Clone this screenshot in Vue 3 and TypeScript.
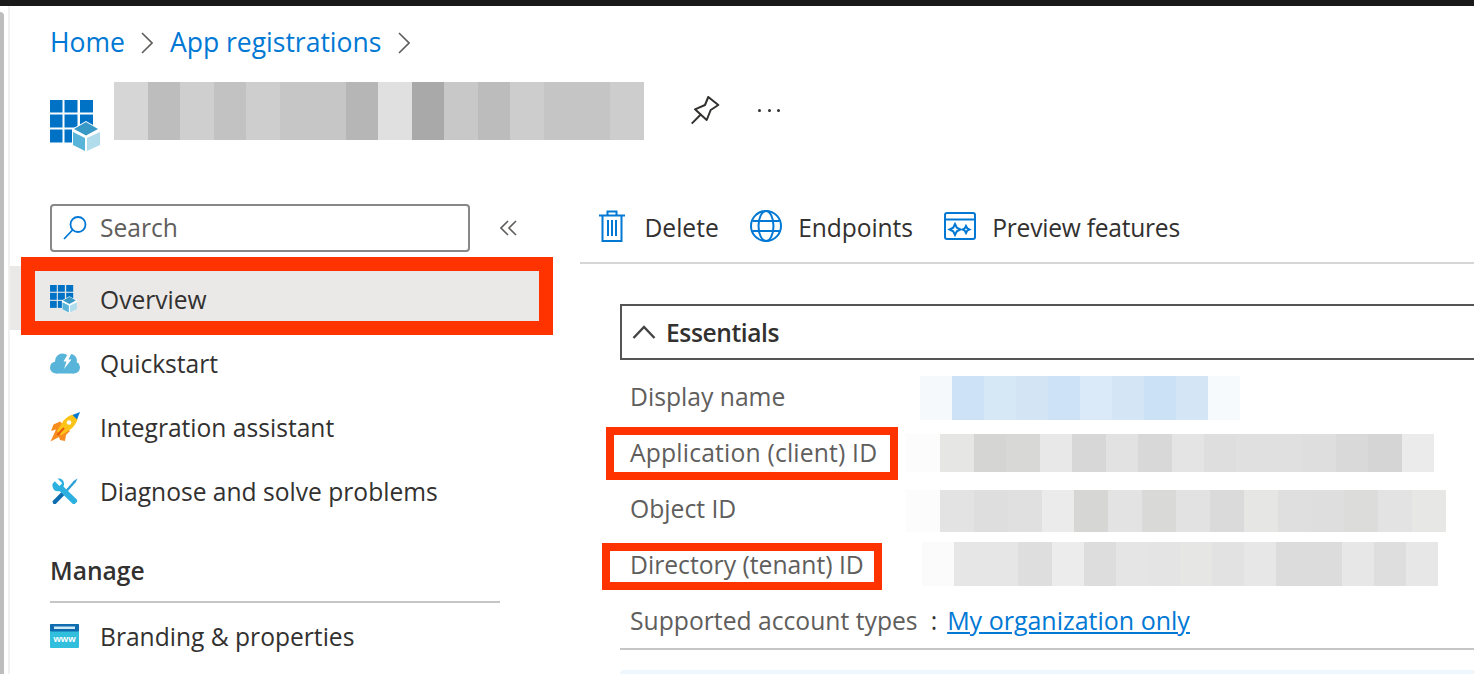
<script setup lang="ts">
interface Cell { w: number; c: string }
const cells = (ws: number[], cs: string[]): Cell[] => ws.map((w, i) => ({ w, c: cs[i] }))

const titleBlur = cells(
  [34, 32, 34, 32, 34, 66, 32, 34, 32, 34, 32, 34, 66, 34],
  ['#d6d6d6', '#bdbdbd', '#cfcfcf', '#c2c2c2', '#cecece', '#c6c6c6', '#b6b6b6', '#e0e0e0', '#a9a9a9', '#c8c8c8', '#bcbcbc', '#cdcdcd', '#c5c5c5', '#cdcdcd']
)

const rows = [
  { label: 'Display name', mark: '', offset: 14, height: 44, nudge: 2,
    blur: cells([32, 32, 32, 32, 32, 32, 32, 32, 32, 32],
      ['#f5f9fc', '#cde2f6', '#d6e7f6', '#d3e5f5', '#cde2f6', '#daeaf8', '#d4e6f6', '#cbe1f6', '#d4e6f6', '#f7fafd']) },
  { label: 'Application (client) ID', mark: 'mark-app', offset: 0, height: 38, nudge: 0,
    blur: cells([34, 34, 32, 34, 32, 34, 32, 34, 32, 32, 66, 34, 32, 34, 32],
      ['#fcfcfc', '#e6e6e4', '#d5d5d3', '#d8d8d6', '#e8e8e8', '#d7d7d7', '#e2e2e2', '#d8d8d8', '#e4e4e4', '#dedede', '#e0e0e0', '#dedede', '#d9d9d9', '#d5d5d5', '#ebebeb']) },
  { label: 'Object ID', mark: '', offset: 0, height: 42, nudge: 4,
    blur: cells([34, 34, 34, 34, 32, 34, 34, 34, 34, 34, 34, 33, 33, 34, 34, 34],
      ['#fcfcfc', '#e3e3e3', '#dedede', '#e0e0e0', '#ebebeb', '#d6d6d4', '#e3e3e3', '#d9d9d7', '#e2e2e2', '#dadada', '#e6e6e4', '#dfdfdf', '#dedede', '#dcdcda', '#e3e3e3', '#e7e7e5']) },
  { label: 'Directory (tenant) ID', mark: 'mark-dir', offset: 16, height: 44, nudge: -2,
    blur: cells([32, 64, 34, 32, 32, 32, 32, 32, 32, 32, 66, 32, 32, 32],
      ['#fbfbfb', '#e6e6e6', '#dedede', '#ececec', '#dddddd', '#e5e5e5', '#e4e4e4', '#e6e6e4', '#e2e2e2', '#e7e7e7', '#dcdcdc', '#e7e7e7', '#dedede', '#e7e7e7']) }
]
</script>

<template>
  <div class="page">
    <div class="topbar"></div>
    <div class="frame">
      <div class="edge"></div>
      <div class="content">
        <svg width="0" height="0" class="defs">
          <symbol id="app-icon" viewBox="0 0 50 52">
            <g fill="#0072c6">
              <rect x="0" y="0" width="12.5" height="12.5" />
              <rect x="14.5" y="0" width="13" height="12.5" />
              <rect x="30" y="0" width="13" height="12.5" />
              <rect x="0" y="14.5" width="12.5" height="13" />
              <rect x="14.5" y="14.5" width="13" height="13" />
              <rect x="30" y="14.5" width="13" height="13" />
              <rect x="0" y="29.5" width="12.5" height="13" />
              <rect x="14.5" y="29.5" width="13" height="13" />
            </g>
            <path d="M36 21 L50 29 V45 L36 52 L22 45 V29 Z" fill="#fff" />
            <path d="M36 22 L48 29 L36 35.5 L24 29 Z" fill="#3999c6" />
            <path d="M23 32 L35 38 V51 L23 45 Z" fill="#59b4d9" />
            <path d="M37 38 L50 32 V45 L37 51 Z" fill="#b0dcec" />
          </symbol>
        </svg>

        <nav class="crumbs">
          <a class="crumb">Home</a>
          <svg class="crumb-sep" width="12" height="22" viewBox="0 0 12 22"><path d="M1 1 L11 11 L1 21" /></svg>
          <a class="crumb">App registrations</a>
          <svg class="crumb-sep" width="12" height="22" viewBox="0 0 12 22"><path d="M1 1 L11 11 L1 21" /></svg>
        </nav>

        <header class="title-row">
          <svg class="title-icon" width="50" height="52"><use href="#app-icon" /></svg>
          <div class="blur title-blur">
            <i v-for="(b, i) in titleBlur" :key="i" :style="{ width: b.w + 'px', background: b.c }"></i>
          </div>
          <svg class="pin" width="30" height="30" viewBox="0 0 30 30">
            <path d="M18.3 1 L28.3 9 L20.7 14 L16.7 24 L5 13.3 L15 9 Z" />
            <path d="M11 18.3 L1.7 27.6" />
          </svg>
          <div class="more"><i></i><i></i><i></i></div>
        </header>

        <div class="body">
          <aside class="side">
            <div class="search-row">
              <div class="search">
                <svg width="26" height="26" viewBox="0 0 26 26" class="search-icon">
                  <circle cx="16" cy="9.5" r="7.5" />
                  <path d="M10.5 15 L2 24" />
                </svg>
                <span>Search</span>
              </div>
              <svg class="collapse" width="18" height="16" viewBox="0 0 18 16">
                <path d="M8 1 L1 8 L8 15 M16 1 L9 8 L16 15" />
              </svg>
            </div>

            <a class="nav active">
              <span class="nav-icon"><svg width="27" height="28"><use href="#app-icon" /></svg></span>
              Overview
              <span class="mark mark-thick"></span>
            </a>
            <a class="nav">
              <span class="nav-icon">
                <svg width="30" height="22" viewBox="0 0 30 22">
                  <g fill="#59b4d9">
                    <circle cx="6" cy="15.5" r="6" />
                    <circle cx="12.5" cy="9" r="7.5" />
                    <circle cx="20.5" cy="8.5" r="6.5" />
                    <circle cx="24" cy="15.5" r="6" />
                    <rect x="6" y="13" width="18" height="8.5" />
                  </g>
                  <path d="M19 0 L13.5 9.5 L16.5 9.5 L14 17 L21.5 7.5 L18.5 7.5 L22 0 Z" fill="#fff" />
                </svg>
              </span>
              Quickstart
            </a>
            <a class="nav">
              <span class="nav-icon">
                <svg width="30" height="30" viewBox="0 0 30 30">
                  <path d="M10 9.5 L3.5 12.5 L1 19 L6 17.5 L0.5 29.5 L9 25 L10 28 L15 29 L16 23 L20 19 Z" fill="#f78d1e" />
                  <path d="M7 19 L13.5 8.5 C17 4.5 21 2.5 24 2.5 L27.5 6 C27.5 9 25 13.5 21 17 L11 23.5 Z" fill="#fcc419" />
                  <path d="M22.5 3 L30 0 L27 7.5 Z" fill="#0078d4" />
                  <circle cx="19" cy="10.5" r="2.3" fill="#fff" />
                  <path d="M7.5 23 L14 16" stroke="#e8590c" stroke-width="2" />
                </svg>
              </span>
              Integration assistant
            </a>
            <a class="nav">
              <span class="nav-icon">
                <svg class="tools" width="26" height="27" viewBox="0 0 28 28">
                  <path d="M0.5 24.5 L12.5 12.5 L15.5 15.5 L4 27.5 L1.5 27.5 Z" fill="#0f6cae" />
                  <path d="M13 14.5 L23.5 2.5 L27.5 0 L25.5 4 L15 16 Z" fill="#2a9fd6" />
                  <path d="M3 3 L8 8 L11 5 L6 0 C9 -0.5 13 1 13 6 C13 7 12.8 8 12.3 8.7 L27 23 L27 25 L24.5 27.5 L22.5 27.5 L8 13.5 C3 15 0 11 0.5 6 Z" fill="#2bb0e0" />
                </svg>
              </span>
              Diagnose and solve problems
            </a>

            <h3 class="group">Manage</h3>
            <a class="nav">
              <span class="nav-icon">
                <svg width="29" height="24" viewBox="0 0 29 24">
                  <rect width="29" height="24" rx="1" fill="#32bedd" />
                  <rect width="29" height="7.5" rx="1" fill="#0f6cae" />
                  <rect x="4" y="2.5" width="21" height="2.5" fill="#cfe9f7" />
                  <text x="14.5" y="17.5" class="www">www</text>
                </svg>
              </span>
              Branding &amp; properties
            </a>
          </aside>

          <main class="main">
            <div class="cmdbar">
              <button class="cmd">
                <svg width="32" height="32" viewBox="-3 0 32 32" class="ic">
                  <path d="M0 5.5 H26 M8.5 5 V1.5 H17.5 V5 M3.5 5.5 V31 H22.5 V5.5 M9 10 V26 M13 10 V26 M17 10 V26" />
                </svg>
                <span>Delete</span>
              </button>
              <button class="cmd">
                <svg width="32" height="32" viewBox="0 0 32 32" class="ic">
                  <circle cx="16" cy="16" r="15" />
                  <ellipse cx="16" cy="16" rx="7.5" ry="15" />
                  <path d="M2.5 11 H29.5 M2.5 21 H29.5" />
                </svg>
                <span class="tight">Endpoints</span>
              </button>
              <button class="cmd">
                <svg width="32" height="28" viewBox="0 0 32 28" class="ic">
                  <rect x="1" y="1" width="30" height="26" rx="2" />
                  <path d="M1 7.5 H31" />
                  <path d="M11 12 L12.8 15.7 L16.5 17.5 L12.8 19.3 L11 23 L9.2 19.3 L5.5 17.5 L9.2 15.7 Z" />
                  <path d="M22 14 L23.2 16.3 L25.5 17.5 L23.2 18.7 L22 21 L20.8 18.7 L18.5 17.5 L20.8 16.3 Z" />
                </svg>
                <span class="tighter">Preview features</span>
              </button>
            </div>

            <section class="essentials">
              <div class="ess-head">
                <svg width="24" height="14" viewBox="0 0 24 14"><path d="M1.5 13 L12 2 L22.5 13" /></svg>
                <strong>Essentials</strong>
              </div>
              <div class="ess-list">
                <div v-for="r in rows" :key="r.label" class="ess-row">
                  <span class="ess-label">
                    <span class="ess-text" :class="{ spaced: r.mark === 'mark-app' }">
                      {{ r.label }}
                      <span v-if="r.mark" class="mark" :class="r.mark"></span>
                    </span>
                  </span>
                  <div class="blur" :style="{ marginLeft: r.offset + 'px', marginTop: r.nudge + 'px', height: r.height + 'px' }">
                    <i v-for="(b, i) in r.blur" :key="i" :style="{ width: b.w + 'px', background: b.c }"></i>
                  </div>
                </div>
                <div class="ess-row">
                  <span class="ess-text lifted">Supported account types</span>
                  <span class="colon lifted">:</span>
                  <a class="link lifted">My organization only</a>
                </div>
              </div>
              <div class="banner"></div>
            </section>
          </main>
        </div>
      </div>
    </div>
  </div>
</template>

<style>
html, body { margin: 0; height: 100%; overflow: hidden; background: #fff; }
</style>

<style scoped>
.page {
  height: 674px;
  overflow: hidden;
  display: flex;
  flex-direction: column;
  font-family: "Open Sans", "Noto Sans", sans-serif;
  font-size: 24.6px;
  color: #323130;
}
.topbar { height: 6px; background: #1a1a1a; flex: none; }
.frame { flex: 1; display: flex; min-height: 0; }
.edge {
  width: 4px;
  margin: 6px 4px 0 0;
  background: #bdbdbd;
  border-top-right-radius: 4px;
  flex: none;
}
.content { flex: 1; min-width: 0; border-left: 2px solid #f0f0f0; }
.defs { position: absolute; }

.crumbs { display: flex; align-items: center; height: 74px; padding-left: 40px; gap: 16.5px; }
.crumb { color: #0078d4; font-size: 26.5px; margin-bottom: 2px; }
.crumb-sep { fill: none; stroke: #605e5c; stroke-width: 1.6; }

.title-row { display: flex; align-items: flex-start; height: 116px; padding: 2px 0 0 40px; box-sizing: border-box; }
.title-icon { margin-top: 18px; margin-right: 14px; flex: none; }
.blur { display: flex; flex: none; }
.blur i { display: block; flex: none; }
.title-blur { height: 58px; }
.pin { margin: 14px 0 0 46px; fill: none; stroke: #323130; stroke-width: 2; stroke-linejoin: round; flex: none; }
.more { display: flex; gap: 6.5px; margin: 27px 0 0 38px; }
.more i { width: 3px; height: 3px; border-radius: 50%; background: #323130; }

.body { display: flex; }
.side { width: 570px; flex: none; padding-top: 8px; }
.search-row { display: flex; align-items: center; padding-left: 40px; margin-bottom: 14px; }
.search {
  width: 420px;
  height: 48px;
  box-sizing: border-box;
  border: 2px solid #8a8886;
  border-radius: 4px;
  display: flex;
  align-items: center;
  padding-left: 10px;
  gap: 12px;
  color: #605e5c;
}
.search span { margin-bottom: 2px; }
.search-icon { fill: none; stroke: #0078d4; stroke-width: 1.8; }
.collapse { margin-left: 30px; fill: none; stroke: #605e5c; stroke-width: 1.6; }
.nav {
  position: relative;
  display: flex;
  align-items: center;
  width: 530px;
  height: 64px;
  box-sizing: border-box;
  padding: 2px 0 0 40px;
}
.nav.active { background: #ebe9e8; }
.nav-icon { width: 50px; display: flex; flex: none; }
.tools { margin-left: 2px; }
.group {
  margin: 0 0 0 40px;
  height: 81px;
  box-sizing: border-box;
  width: 450px;
  padding-top: 32px;
  font-size: 24.6px;
  font-weight: 600;
  border-bottom: 2px solid #c8c6c4;
}
.www { font: 700 9.5px "Liberation Sans", sans-serif; fill: #fff; text-anchor: middle; }

.mark { position: absolute; border-style: solid; border-color: #ff3300; pointer-events: none; }
.mark-thick { left: 11px; right: -13px; top: -9px; bottom: -5px; border-width: 14px; box-sizing: border-box; }
.mark-app { left: -24px; right: -21px; top: -9px; bottom: -11px; border-width: 8px; }
.mark-dir { left: -28px; right: -18px; top: -5px; bottom: -9px; border-width: 8px; }

.main { flex: 1; min-width: 0; }
.cmdbar {
  height: 68px;
  box-sizing: border-box;
  border-bottom: 2px solid #d6d6d6;
  display: flex;
  align-items: center;
  padding: 0 0 6px 16px;
  gap: 31px;
}
.cmd {
  display: flex;
  align-items: center;
  gap: 16.5px;
  padding: 0;
  border: 0;
  background: none;
  font: inherit;
  color: #323130;
}
.cmd span { margin-top: 2px; }
.tight { letter-spacing: -0.1px; }
.tighter { letter-spacing: -0.25px; }
.ic { fill: none; stroke: #0078d4; stroke-width: 2; flex: none; }

.essentials { margin: 40px 0 0 40px; }
.ess-head {
  height: 56px;
  box-sizing: border-box;
  border: 2px solid #555;
  border-right: 0;
  display: flex;
  align-items: center;
  padding-left: 10px;
  gap: 10px;
}
.ess-head svg { fill: none; stroke: #444; stroke-width: 2.4; }
.ess-head strong { font-weight: 600; letter-spacing: -0.4px; }
.ess-list { margin-top: 9px; border-bottom: 2px solid #c8c6c4; padding-left: 10px; height: 281px; box-sizing: border-box; }
.ess-row { height: 56px; display: flex; align-items: center; color: #605e5c; font-size: 24.7px; }
.ess-label { width: 276px; flex: none; margin-bottom: 2px; }
.ess-text { position: relative; }
.spaced { letter-spacing: 0.18px; }
.lifted { margin-bottom: 2px; }
.colon { margin-left: 13px; margin-right: 10px; color: #323130; }
.link { color: #0078d4; text-decoration: underline; font-size: 25px; }
.banner { margin-top: 20px; height: 40px; background: #eff6fc; border-radius: 4px 0 0 0; }
</style>
